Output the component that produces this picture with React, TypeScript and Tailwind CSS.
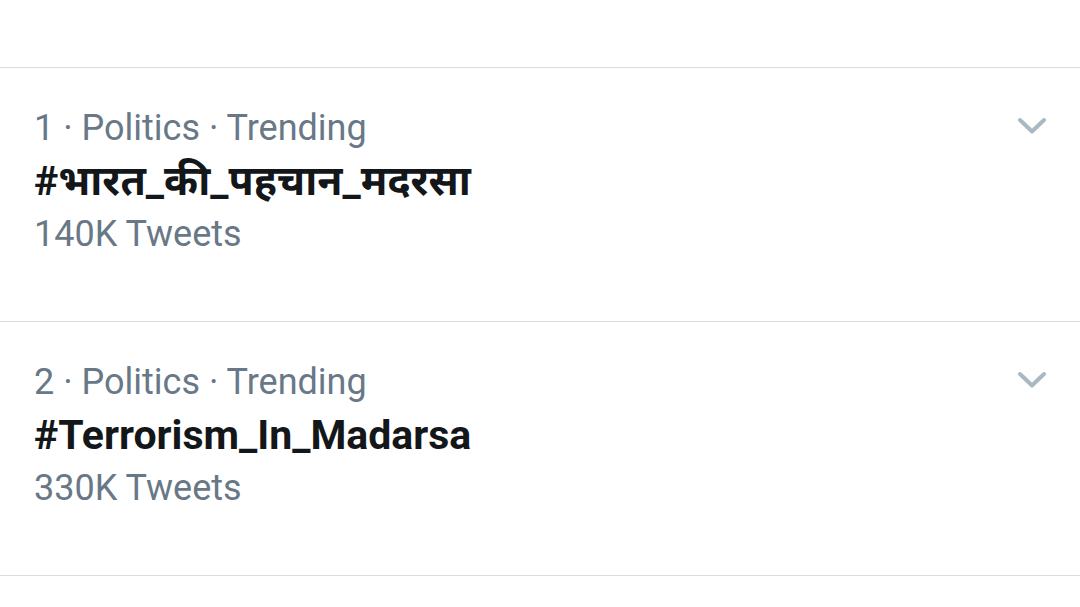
const trends = [
  { rank: 1, tag: '#भारत_की_पहचान_मदरसा', count: '140K' },
  { rank: 2, tag: '#Terrorism_In_Madarsa', count: '330K' },
];

const Chevron = () => (
  <svg width="32" height="20" viewBox="0 0 32 20" fill="none">
    <path d="M4 4 L16 15.5 L28 4" stroke="#aab8c2" strokeWidth="4" strokeLinecap="round" strokeLinejoin="round" />
  </svg>
);

const App = () => {
  return (
    <div
      className="w-[1080px] h-[607px] bg-white overflow-hidden"
      style={{ fontFamily: 'Roboto, "Noto Sans", "Noto Sans Devanagari", sans-serif' }}
    >
      <div className="h-[67px]" />
      {trends.map((t) => (
        <div key={t.rank} className="border-t border-[#d8dde1] h-[254px] flex pl-[34px] pr-[32px] pt-[34px]">
          <div className="flex-1">
            <div className="text-[36px] leading-[53px] text-[#687887]">
              {t.rank} · Politics · Trending
            </div>
            <div className="text-[41px] leading-[53px] font-bold text-[#14171a]">{t.tag}</div>
            <div className="text-[36px] leading-[53px] text-[#687887]">{t.count} Tweets</div>
          </div>
          <div className="pt-[14px]">
            <Chevron />
          </div>
        </div>
      ))}
      <div className="border-t border-[#d8dde1]" />
    </div>
  );
};

export default App;
